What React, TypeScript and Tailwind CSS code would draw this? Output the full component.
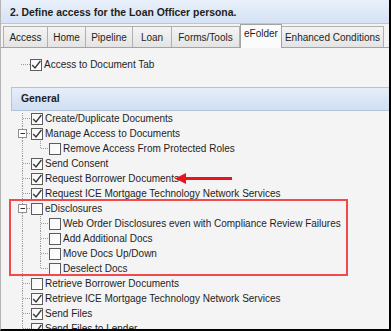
import React from "react";

type Row = {
  label: string;
  level: 1 | 2;
  checked: boolean;
  expander?: boolean;
  first?: boolean;
  last?: boolean;
};

const tabs = [
  { label: "Access", w: "w-[45px]" },
  { label: "Home", w: "w-[38px]" },
  { label: "Pipeline", w: "w-[47px]" },
  { label: "Loan", w: "w-[39px]" },
  { label: "Forms/Tools", w: "w-[68px]" },
  { label: "eFolder", w: "w-[42px]", selected: true },
  { label: "Enhanced Conditions", w: "w-[102px]" },
];

const rows: Row[] = [
  { label: "Create/Duplicate Documents", level: 1, checked: true, first: true },
  { label: "Manage Access to Documents", level: 1, checked: true, expander: true },
  { label: "Remove Access From Protected Roles", level: 2, checked: false, last: true },
  { label: "Send Consent", level: 1, checked: true },
  { label: "Request Borrower Documents", level: 1, checked: true },
  { label: "Request ICE Mortgage Technology Network Services", level: 1, checked: true },
  { label: "eDisclosures", level: 1, checked: false, expander: true },
  { label: "Web Order Disclosures even with Compliance Review Failures", level: 2, checked: false },
  { label: "Add Additional Docs", level: 2, checked: false },
  { label: "Move Docs Up/Down", level: 2, checked: false },
  { label: "Deselect Docs", level: 2, checked: false, last: true },
  { label: "Retrieve Borrower Documents", level: 1, checked: false },
  { label: "Retrieve ICE Mortgage Technology Network Services", level: 1, checked: true },
  { label: "Send Files", level: 1, checked: true },
  { label: "Send Files to Lender", level: 1, checked: true },
];

const dot = { stroke: "#9a9a9a", strokeWidth: 1, strokeDasharray: "1 1" };

function CheckBox({ checked }: { checked: boolean }) {
  return (
    <span className="w-[12px] h-[12px] shrink-0 border border-[#5c5c5c] bg-gradient-to-br from-[#f6f6f6] to-[#ffffff] flex items-center justify-center">
      {checked && (
        <svg width="10" height="10" viewBox="0 0 10 10">
          <path d="M1.2 5 L4 8 L9.4 1" fill="none" stroke="#3a3a3a" strokeWidth="1.4" />
        </svg>
      )}
    </span>
  );
}

function Gutter({ row }: { row: Row }) {
  const w = row.level === 1 ? 30 : 48;
  return (
    <svg width={w} height="15" className="shrink-0">
      {row.expander ? (
        <>
          <line x1="21.5" y1="0" x2="21.5" y2="3" style={dot} />
          <line x1="21.5" y1="12" x2="21.5" y2="15" style={dot} />
          <line x1="26" y1="7.5" x2="30" y2="7.5" style={dot} />
          <rect x="17.5" y="3.5" width="8" height="8" fill="#fff" stroke="#8f8f8f" />
          <line x1="19.5" y1="7.5" x2="24" y2="7.5" stroke="#333" />
        </>
      ) : (
        <>
          <line x1="21.5" y1={row.first ? 2 : 0} x2="21.5" y2="15" style={dot} />
          {row.level === 1 && <line x1="22" y1="7.5" x2="30" y2="7.5" style={dot} />}
        </>
      )}
      {row.level === 2 && (
        <>
          <line x1="39.5" y1="0" x2="39.5" y2={row.last ? 7.5 : 15} style={dot} />
          <line x1="40" y1="7.5" x2="48" y2="7.5" style={dot} />
        </>
      )}
    </svg>
  );
}

export default function App() {
  return (
    <div className="relative w-[391px] h-[331px] overflow-hidden flex flex-col bg-[#f4f4f4] border-l border-r-2 border-b-2 border-l-[#b4b4b4] border-r-black border-b-black text-[#1e1e1e] text-[10px] font-['Liberation_Sans',Arial,sans-serif]">
      {/* Title */}
      <div className="h-[24px] shrink-0 flex items-center pl-[9px] pt-[2px] border-b border-[#b7c6da] bg-gradient-to-b from-[#e9f0fa] to-[#d5e3f5] font-bold text-[10.4px]">
        2. Define access for the Loan Officer persona.
      </div>

      {/* Tabs */}
      <div className="h-[24px] shrink-0 flex items-end pl-[2px] border-b border-[#a3a3a3] bg-[#f3f3f3]">
        {tabs.map((t) =>
          t.selected ? (
            <div
              key={t.label}
              className={`${t.w} h-[24px] -mb-px bg-[#fbfbfb] border border-b-0 border-[#a3a3a3] flex justify-center pt-[3px] leading-[12px]`}
            >
              {t.label}
            </div>
          ) : (
            <div
              key={t.label}
              className={`${t.w} h-[21px] border border-b-0 border-l-0 first:border-l border-[#b0b0b0] bg-gradient-to-b from-[#f4f4f4] to-[#e4e4e4] flex items-center justify-center`}
            >
              {t.label}
            </div>
          )
        )}
      </div>

      {/* Tab page */}
      <div className="flex-1 flex flex-col">
        <div className="mt-[9px] h-[15px] flex items-center">
          <svg width="29" height="15" className="shrink-0">
            <line x1="20" y1="7.5" x2="29" y2="7.5" style={dot} />
          </svg>
          <CheckBox checked />
          <span className="ml-[2px] leading-[15px]">Access to Document Tab</span>
        </div>

        <div className="mt-[15px] ml-[10px] h-[24px] flex items-center pl-[9px] border-t border-b border-l border-[#b3c4da] bg-gradient-to-b from-[#e6eef9] to-[#d0dff2] font-bold text-[10.4px]">
          General
        </div>

        <div className="flex flex-col">
          {rows.map((r) => (
            <div key={r.label} className="h-[15px] flex items-center whitespace-nowrap">
              <Gutter row={r} />
              <CheckBox checked={r.checked} />
              <span className="ml-[2px] leading-[15px]">{r.label}</span>
            </div>
          ))}
        </div>
      </div>

      {/* annotations */}
      <div className="absolute left-[8px] top-[199px] w-[339px] h-[77px] border-2 border-[#f24a4c]" />
      <svg className="absolute left-[174px] top-[173px]" width="58" height="11" viewBox="0 0 58 11">
        <polygon points="0,5.5 11,0 11,11" fill="#e8151f" />
        <rect x="10" y="4" width="47" height="3" fill="#e8151f" />
      </svg>
    </div>
  );
}
